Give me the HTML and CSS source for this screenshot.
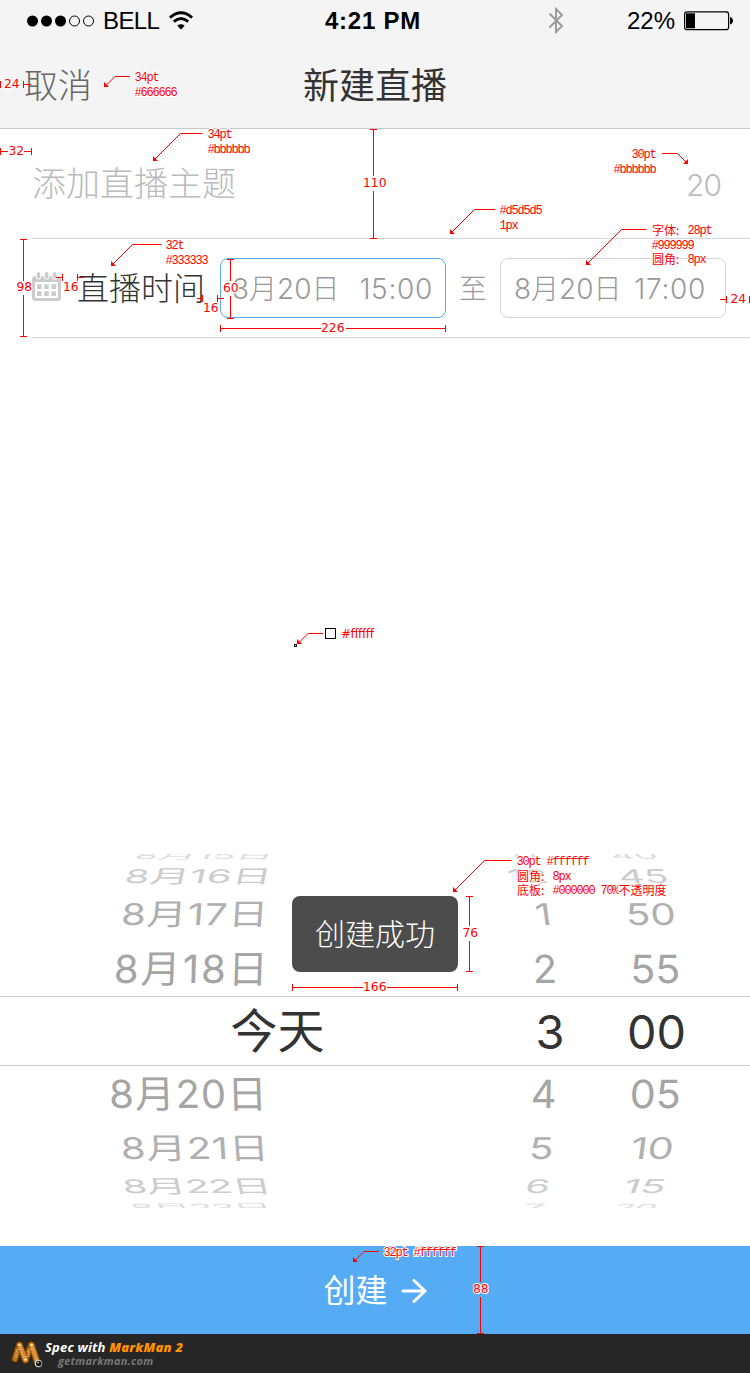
FILE: index.html
```
<!DOCTYPE html>
<html lang="zh-CN">
<head>
<meta charset="utf-8">
<title>新建直播</title>
<link rel="stylesheet" href="styles.css">
</head>
<body>
<div class="page">
  <header class="header">
    <div class="status">
      <div class="carrier">
        <svg width="68" height="14" viewBox="0 0 68 14"><circle cx="5.500" cy="7" r="5.500"/><circle cx="19.500" cy="7" r="5.500"/><circle cx="33.500" cy="7" r="5.500"/><g fill="none" stroke="#000"><circle cx="47.500" cy="7" r="5"/><circle cx="61.500" cy="7" r="5"/></g></svg>
        <span class="carrier-name">BELL</span>
        <svg class="wifi" width="24" height="19" viewBox="0 0 24 19"><path d="M8.300 14.700Q12 11.800 15.700 14.700L12 18.500Z"/><g fill="none" stroke="#000" stroke-width="2.900"><path d="M.9 6.600Q12-3.200 23.100 6.600"/><path d="M4.800 10.700Q12 4.500 19.200 10.700"/></g></svg>
      </div>
      <span class="clock">4:21 PM</span>
      <div class="power">
        <svg class="bluetooth" width="16" height="27" viewBox="0 0 16 27"><path d="M1.500 6.500 14 19 8 25V2l6 6L1.500 20.500" fill="none" stroke="#999" stroke-width="1.900"/></svg>
        <span class="percent">22%</span>
        <svg width="50" height="20" viewBox="0 0 50 20"><rect x=".6" y=".9" width="44" height="17.800" rx="2.500" fill="none" stroke="#000" stroke-width="1.200"/><rect x="2" y="2.300" width="9" height="15"/><path d="M46 6q3 1 3 3.800T46 13.500Z"/></svg>
      </div>
    </div>
    <nav class="nav">
      <span class="cancel">取消</span>
      <h1 class="title">新建直播</h1>
    </nav>
  </header>

  <section class="topic">
    <span class="topic-hint">添加直播主题</span>
    <span class="topic-count">20</span>
  </section>

  <section class="time">
    <svg class="calendar" width="29" height="30" viewBox="0 0 29 30"><rect y="4" width="29" height="25" rx="3.500" fill="#ccc"/><rect x="3" y="10" width="23" height="16" rx="1" fill="#fff"/><g fill="#ccc"><path d="M5 12.300h4.600V17H5zM12.200 12.300h4.600V17h-4.600zM19.500 12.300H24V17h-4.500zM5 19.300h4.600V24H5zM12.200 19.300h4.600V24h-4.600zM19.500 19.300H24V24h-4.500z"/><g stroke="#fff" stroke-width="1"><rect x="4.200" y="-.3" width="4.600" height="7.500" rx="2.200"/><rect x="12.300" y="-.3" width="4.600" height="7.500" rx="2.200"/><rect x="20.400" y="-.3" width="4.600" height="7.500" rx="2.200"/></g></g></svg>
    <span class="time-label">直播时间</span>
    <span class="field field-active"><span>3月20日</span><span class="hour">15:00</span></span>
    <span class="to">至</span>
    <span class="field field-end"><span>8月20日</span><span class="hour">17:00</span></span>
  </section>

  <section class="picker">
    <svg class="row r15" width="750" height="7"><text transform="matrix(1 0 -.15 .25 133 4.500)" textLength="139" lengthAdjust="spacingAndGlyphs">8月15日</text><text transform="matrix(1 0 .2 .25 509 4.500)" textLength="32" lengthAdjust="spacingAndGlyphs">11</text><text transform="matrix(1 0 .2 .25 613 4.500)" textLength="47" lengthAdjust="spacingAndGlyphs">40</text></svg>
    <svg class="row r16" width="750" height="28"><text transform="matrix(1 0 -.1 .47 123.500 21.800)" textLength="147" lengthAdjust="spacing">8月16日</text><text transform="matrix(1 0 .14 .47 510 21.800)" textLength="40" lengthAdjust="spacingAndGlyphs">12</text><text transform="matrix(1 0 .12 .47 620 21.800)" textLength="50" lengthAdjust="spacingAndGlyphs">45</text></svg>
    <svg class="row r17" width="750" height="51"><text transform="matrix(1 0 -.05 .75 120.500 36)" textLength="147">8月17日</text><text transform="matrix(1 0 .1 .75 536.500 36)">1</text><text transform="matrix(1 0 .05 .75 626.500 36)" textLength="50" lengthAdjust="spacingAndGlyphs">50</text></svg>
    <svg class="row r18" width="750" height="56"><text transform="matrix(1 0 -.03 .97 113.500 42.500)" textLength="154">8月18日</text><text transform="matrix(1 0 .02 .97 533 42.500)">2</text><text transform="matrix(1 0 .02 .97 630.500 42.500)" textLength="50" lengthAdjust="spacingAndGlyphs">55</text></svg>
    <svg class="row current" width="750" height="70"><text x="230.500" y="51">今天</text><text x="535.500" y="52">3</text><text x="627" y="52" textLength="59" lengthAdjust="spacingAndGlyphs">00</text></svg>
    <svg class="row r18" width="750" height="56"><text transform="matrix(1 0 .03 .97 109.500 42)" textLength="158">8月20日</text><text transform="matrix(1 0 -.02 .97 530.500 42)">4</text><text transform="matrix(1 0 -.02 .97 629.500 42)" textLength="51" lengthAdjust="spacingAndGlyphs">05</text></svg>
    <svg class="row r17" width="750" height="48"><text transform="matrix(1 0 .05 .75 121.500 37)" textLength="148">8月21日</text><text transform="matrix(1 0 -.05 .75 528.500 37)">5</text><text transform="matrix(1 0 -.1 .75 629.500 37)" textLength="43" lengthAdjust="spacingAndGlyphs">10</text></svg>
    <svg class="row r16" width="750" height="30"><text transform="matrix(1 0 .1 .47 124 23)" textLength="149">8月22日</text><text transform="matrix(1 0 -.1 .47 524 23)">6</text><text transform="matrix(1 0 -.17 .47 621.500 23)" textLength="42" lengthAdjust="spacingAndGlyphs">15</text></svg>
    <svg class="row r15" width="750" height="8"><text transform="matrix(1 0 .15 .25 132 10.500)" textLength="143">8月23日</text><text transform="matrix(1 0 -.15 .25 520 10.500)">7</text><text transform="matrix(1 0 -.2 .25 611 10.500)" textLength="43" lengthAdjust="spacingAndGlyphs">20</text></svg>
    <div class="toast">创建成功</div>
  </section>

  <button class="create" type="button"><span>创建</span><svg width="26" height="26" viewBox="0 0 26 26"><path d="M2 13H24M13 2.500 24 13 13 23.500" fill="none" stroke="#fff" stroke-width="3" stroke-linecap="round" stroke-linejoin="round"/></svg></button>

  <footer class="footer">
    <svg width="34" height="28" viewBox="0 0 34 28"><g fill="none" stroke-linecap="round"><g stroke="#6d3900" stroke-width="7"><path d="M8.500 4 4 18M20 4 15 18"/></g><g stroke="#b8721c" stroke-width="5"><path d="M8 4 4 18M20 4 15 18"/></g><g stroke="#7c4205" stroke-width="7"><path d="M8.500 4 14.500 19M20.500 4 26.500 22"/></g><g stroke="#cf842a" stroke-width="5"><path d="M8.500 4 14.500 19M20.500 4 26.500 22"/></g><path d="M9 6 14 18M21 6 26 20M7 8 4.500 17M19 8 16.500 16" stroke="#f0bd6c" stroke-width="2.500" stroke-linecap="butt" stroke-dasharray="1 1.500"/></g><circle cx="8.500" cy="4" r="1.300" fill="#ffe2a0"/><circle cx="20.500" cy="4" r="1.300" fill="#ffe2a0"/><circle cx="14.500" cy="18.500" r="1.300" fill="#ffe2a0"/><circle cx="27.500" cy="22.500" r="3.700" fill="#ddd"/><circle cx="27.800" cy="22.500" r="2.800" fill="#111"/><circle cx="27" cy="21.500" r=".8" fill="#fff"/></svg>
    <div class="credit"><span class="credit-name">Spec with <b>MarkMan 2</b></span><span class="credit-site">getmarkman.com</span></div>
  </footer>

  <svg class="marks" width="750" height="1373" viewBox="0 0 750 1373">
    <g class="rule">
      <path d="M.5 81v7M23 84.500h8M23.500 81v7"/>
      <path d="M.5 148v7M1 151.500h7M24 151.500h7M31.500 148v7"/>
      <path d="M370 129.500h7M373.500 130v46M373.500 191v47M370 238.500h7"/>
      <path d="M20 239.500h7M23.500 240v41M23.500 295v41M20 336.500h7"/>
      <path d="M56 277.500h6M62.500 274v7M77.500 274v7M78 277.500h6"/>
      <path d="M197 298.500h5M202.500 295v7M217.500 295v7M218 298.500h6"/>
      <path d="M227 259.500h7M230.500 260v21M230.500 296v22M227 318.500h7"/>
      <path d="M220.500 325v7M221 328.500h100M346 328.500h99M445.500 325v7"/>
      <path d="M720 299.500h6M726.500 296v7M749.500 296v7"/>
      <path d="M466 896.500h7M469.500 897v29M469.500 941v30M466 971.500h7"/>
      <path d="M292.500 984v7M293 987.500h70M387 987.500h70M457.500 984v7"/>
      <path d="M477 1246.500h7M480.500 1247v35M480.500 1297v36M477 1333.500h7"/>
    </g>
    <g class="leader">
      <path d="M130 76.500H115L105 86.500"/><path d="M202.500 133.500H180.500L154 160"/><path d="M495 209.500H474.500L451 233"/><path d="M646.500 229.500H621.500L587 264"/><path d="M161 244.500H132.500L112 265"/><path d="M323 633.500H308L299 642.500"/><path d="M511.500 860.500H484.500L454 891"/><path d="M379 1251.500H364L354 1261.500"/><path d="M662 153.500H677.500L687 163"/>
    </g>
    <path class="tips" d="M104 82v5h5zM153 156v5h5zM450 229v5h5zM586 260v5h5zM111 261v5h5zM297 639v5h5zM453 887v5h5zM353 1257v5h5zM688 159v5h-5z"/>
    <rect x="325.500" y="628.500" width="10" height="10" fill="#fff" stroke="#000"/><rect x="294.500" y="644.500" width="2" height="2" fill="#fff" stroke="#000"/>
    <g class="size">
      <text x="4" y="88">24</text><text x="8.500" y="155">32</text><text x="363" y="187">110</text><text x="16.500" y="291">98</text><text x="63" y="291">16</text><text x="203" y="312">16</text><text x="223" y="292">60</text><text x="321" y="332">226</text><text x="730.500" y="303">24</text><text x="462.500" y="937">76</text><text x="363" y="991">166</text><text x="473" y="1293">88</text>
    </g>
    <g class="note">
      <text x="134.500" y="81">34pt</text><text x="134.500" y="96">#666666</text>
      <text x="207.500" y="138">34pt</text><text x="207.500" y="153">#bbbbbb</text>
      <text x="631.500" y="158">30pt</text><text x="613.500" y="173">#bbbbbb</text>
      <text x="499.500" y="214">#d5d5d5</text><text x="499.500" y="229">1px</text>
      <text class="han" x="652" y="235">字体:</text><text x="687.500" y="234">28pt</text><text x="651.500" y="249">#999999</text><text class="han" x="652" y="264">圆角:</text><text x="687.500" y="263">8px</text>
      <text x="165.500" y="249">32t</text><text x="165.500" y="264">#333333</text>
      <text class="swatch" x="341" y="638" textLength="33">#ffffff</text>
      <text x="516.500" y="865">30pt #ffffff</text><text class="han" x="517" y="881">圆角:</text><text x="552.500" y="880">8px</text><text class="han" x="517" y="895">底板:</text><text x="552.500" y="894">#000000</text><text x="600.500" y="894">70%</text><text class="han" x="618.500" y="895">不透明度</text>
      <text x="383.500" y="1256">32pt #ffffff</text>
    </g>
  </svg>
</div>
</body>
</html>
```

FILE: styles.css
```
* { box-sizing: border-box; }
body { margin: 0; background: #fff; font-family: Inter, "Noto Sans CJK SC", sans-serif; }
svg { flex: none; display: block; }
.page { position: relative; width: 750px; height: 1373px; display: flex; flex-direction: column; overflow: hidden; white-space: nowrap; }

.header { height: 129px; background: #f4f4f4; border-bottom: 1px solid #c8c8c8; }
.status { height: 40px; padding: 0 16px 0 27px; display: grid; grid-template-columns: 298px 96px 1fr; align-items: center; font-family: "Liberation Sans", Arial, sans-serif; font-size: 24px; line-height: 40px; color: #000; }
.carrier, .power { display: flex; align-items: center; }
.carrier-name { margin: 1px 0 0 8px; letter-spacing: -.6px; }
.wifi { margin-left: 10px; }
.clock { margin-top: 1px; font-weight: 700; letter-spacing: .75px; }
.power { justify-content: flex-end; }
.bluetooth { margin-right: 63px; }
.percent { margin: 1px 9px 0 0; }
.nav { height: 88px; padding-left: 24px; display: grid; grid-template-columns: 279px 1fr; align-items: center; }
.cancel { padding-bottom: 2px; font-size: 34px; font-weight: 300; color: #666; }
.title { margin: 0; padding-bottom: 2px; font-size: 36px; font-weight: 400; color: #333; }

.topic { height: 110px; margin-left: 32px; padding-right: 29px; display: flex; align-items: center; justify-content: space-between; border-bottom: 1px solid #d5d5d5; color: #bbb; font-weight: 300; }
.topic-hint { font-size: 34px; padding-bottom: 4px; }
.topic-count { font-size: 30px; padding-top: 2px; letter-spacing: -1px; }

.time { height: 99px; margin-left: 32px; padding-right: 24px; display: flex; align-items: center; border-bottom: 1px solid #d5d5d5; font-weight: 300; }
.calendar { margin: -3px 16px 0 0; }
.time-label { width: 143px; padding-bottom: 5px; font-size: 32px; color: #333; }
.field { width: 226px; height: 60px; padding: 0 12px 2px 11px; display: flex; align-items: center; justify-content: space-between; border: 1px solid #d5d5d5; border-radius: 8px; font-size: 28px; color: #999; }
.field-active { border-color: #56abf5; }
.field-end { padding-left: 13px; padding-right: 19px; }
.hour { padding-top: 3px; letter-spacing: .7px; }
.to { width: 54px; padding-bottom: 2px; text-align: center; font-size: 28px; color: #999; }

.picker { position: relative; margin-top: 516px; height: 392px; }
.row { width: 750px; font-size: 40px; }
.row text { fill: currentColor; }
.r15 { color: #ddd; }
.r16 { color: #ccc; }
.r17 { color: #b0b0b0; }
.r18 { color: #a5a5a5; }
.current { border: solid #ccc; border-width: 1px 0; color: #333; font-size: 47px; }
.toast { position: absolute; left: 292px; top: 42px; width: 166px; height: 76px; border-radius: 8px; background: rgba(0, 0, 0, .7); color: #fff; font-size: 30px; font-weight: 300; line-height: 76px; text-align: center; }

.create { height: 88px; border: 0; padding: 0; display: flex; align-items: center; justify-content: center; gap: 13px; background: #56abf5; color: #fff; font: 400 32px/84px "Noto Sans CJK SC", sans-serif; }
.create span { padding-bottom: 4px; }
.create svg { margin-top: 2px; }
.footer { height: 39px; padding: 4px 11px; display: flex; background: #262626; font-family: "Open Sans", sans-serif; font-style: italic; font-weight: 700; }
.footer svg { margin-top: 3px; }
.credit { display: flex; flex-direction: column; }
.credit-name { font-size: 13px; line-height: 19px; letter-spacing: .2px; color: #fff; }
.credit-name b { color: #ff9200; }
.credit-site { margin: -2px 0 0 13px; font-size: 11px; line-height: 12px; letter-spacing: .25px; color: #777; }

.marks { position: absolute; left: 0; top: 0; pointer-events: none; }
.rule, .leader { fill: none; stroke: red; }
.rule { shape-rendering: crispEdges; }
.tips { fill: red; }
.size, .note { fill: red; stroke: #fff; stroke-width: 2px; paint-order: stroke; }
.size { font: 12.300px "DejaVu Sans", sans-serif; }
.note { font: 12px "Liberation Mono", monospace; letter-spacing: -1.2px; }
.note .han { font: 12px "Noto Sans CJK SC", sans-serif; letter-spacing: 0; }
.note .swatch { font: 12px "DejaVu Sans", sans-serif; letter-spacing: 0; }
```
